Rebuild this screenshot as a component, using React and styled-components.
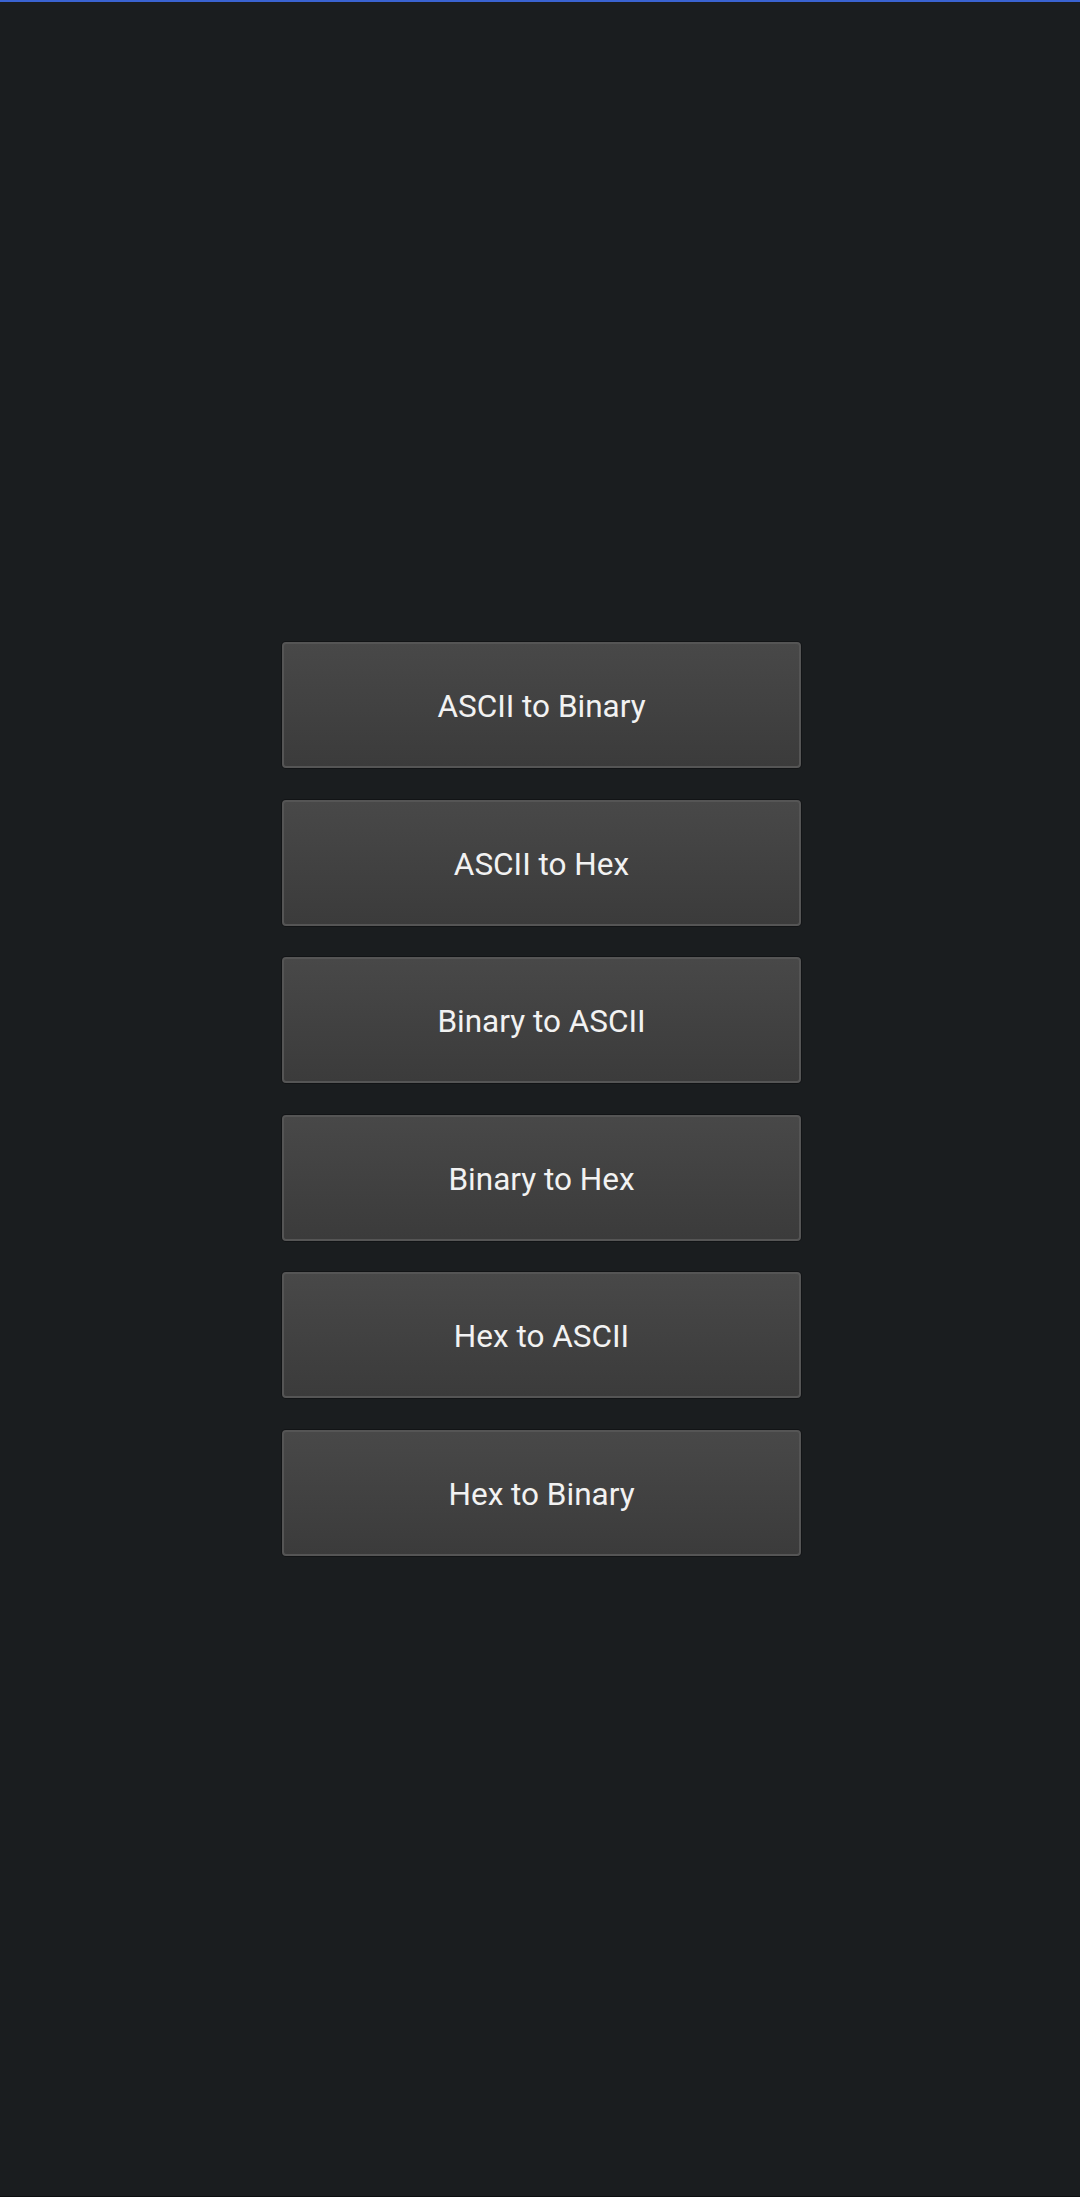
import React from 'react';
import styled, { createGlobalStyle } from 'styled-components';

const GlobalStyle = createGlobalStyle`
  html, body {
    margin: 0;
    padding: 0;
    background: #1a1d1f;
  }
  * {
    box-sizing: border-box;
  }
`;

const Page = styled.div`
  min-height: 100vh;
  display: flex;
  flex-direction: column;
  align-items: center;
  justify-content: center;
  border-top: 2px solid #3a63d1;
  border-bottom: 1px solid #0c0e0f;
  font-family: Roboto, "Liberation Sans", sans-serif;
`;

const Menu = styled.nav`
  display: flex;
  flex-direction: column;
  gap: 31.5px;
  margin-left: 3px;
`;

const ConvertButton = styled.button`
  width: 519px;
  height: 126px;
  padding: 3px 0 0;
  border: 2px solid #555555;
  border-radius: 4px;
  background: linear-gradient(to bottom, #484848, #3b3b3b);
  box-shadow: 0 0 0 1px #121416;
  color: #f2f2f2;
  font-family: inherit;
  font-size: 31.5px;
  font-weight: 400;
  cursor: pointer;
`;

const conversions = [
  'ASCII to Binary',
  'ASCII to Hex',
  'Binary to ASCII',
  'Binary to Hex',
  'Hex to ASCII',
  'Hex to Binary',
];

export default function App() {
  return (
    <>
      <GlobalStyle />
      <Page>
        <Menu>
          {conversions.map((label) => (
            <ConvertButton key={label}>{label}</ConvertButton>
          ))}
        </Menu>
      </Page>
    </>
  );
}
